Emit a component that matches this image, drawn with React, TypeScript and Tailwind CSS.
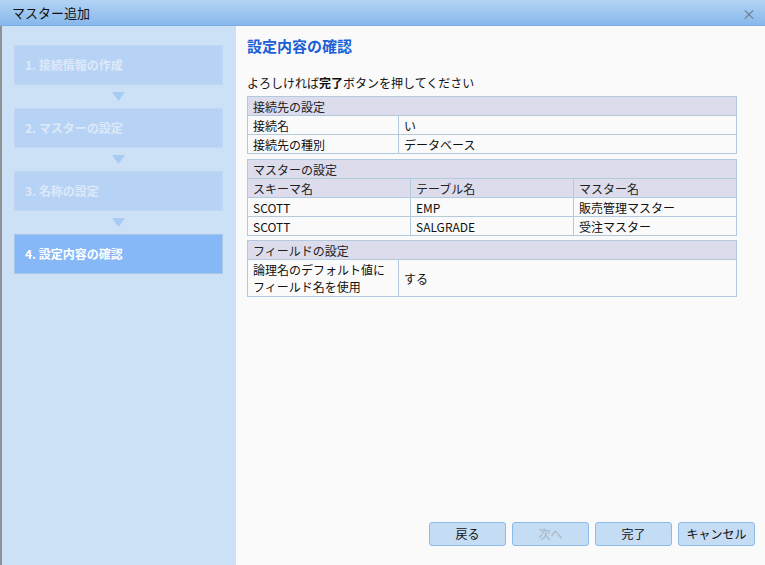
import React from "react";

const font = { fontFamily: '"Noto Sans CJK JP", "Noto Sans", sans-serif' };

function Step({ label, active }: { label: string; active?: boolean }) {
  return (
    <div
      className={
        active
          ? "w-[209px] h-[40px] flex items-center pl-[10px] bg-[#86b8f8] border border-[#a9c6e6] text-white font-bold text-[12px]"
          : "w-[209px] h-[40px] flex items-center pl-[10px] bg-[#b6d3f6] border border-[#c0d8f4] text-[#dde9f8] font-bold text-[12px]"
      }
    >
      {label}
    </div>
  );
}

function Arrow() {
  return (
    <div className="h-[23px] w-[209px] flex items-center justify-center">
      <svg width="13" height="9" viewBox="0 0 13 9">
        <polygon points="0,0 13,0 6.5,9" fill="#a8cbf4" />
      </svg>
    </div>
  );
}

const cell = "border border-[#b3c9de] h-[19px] px-[5px] text-[12px] leading-[17px] text-[#111] align-middle";
const head = "border border-[#b3c9de] h-[19px] px-[5px] text-[12px] leading-[17px] text-[#222] bg-[#dcdcec] text-left font-normal align-middle";

function Btn({ label, disabled }: { label: string; disabled?: boolean }) {
  return (
    <div
      className={
        "w-[77px] h-[24px] flex items-center justify-center rounded-[3px] border border-[#8bbbe9] bg-[#c4dcf4] text-[12px] " +
        (disabled ? "text-[#a8b4c0]" : "text-[#111]")
      }
    >
      {label}
    </div>
  );
}

export default function App() {
  return (
    <div className="w-[765px] h-[565px] flex flex-col overflow-hidden bg-[#fafafa]" style={font}>
      <div className="h-[26px] flex items-center border-b border-[#79aee6] bg-gradient-to-b from-[#b3d3f4] to-[#87b8eb] pl-[3px] pr-[2px]">
        <div className="flex-1 pl-[9px] text-[13px] text-[#111]">マスター追加</div>
        <div className="w-[20px] mr-[4px] text-[14px] text-[#6c7a8a] text-center leading-none">×</div>
      </div>
      <div className="flex-1 flex">
        <div className="w-[2px] bg-[#8e9296]" />
        <div className="w-[234px] bg-[#cce0f6] pt-[19px] px-[12px] flex flex-col">
          <Step label="1. 接続情報の作成" />
          <Arrow />
          <Step label="2. マスターの設定" />
          <Arrow />
          <Step label="3. 名称の設定" />
          <Arrow />
          <Step label="4. 設定内容の確認" active />
        </div>
        <div className="flex-1 flex flex-col pl-[11px] pr-[28px] pt-[9px] pb-[18px]">
          <div className="text-[15px] font-bold text-[#1c5fd6] leading-[22px]">設定内容の確認</div>
          <div className="mt-[17px] text-[12px] text-[#111] leading-[17px]">
            よろしければ<span className="font-bold">完了</span>ボタンを押してください
          </div>
          <table className="mt-[5px] w-[490px] border-collapse">
            <tbody>
              <tr>
                <th colSpan={2} className={head}>接続先の設定</th>
              </tr>
              <tr>
                <td className={cell + " w-[151px]"}>接続名</td>
                <td className={cell}>い</td>
              </tr>
              <tr>
                <td className={cell}>接続先の種別</td>
                <td className={cell}>データベース</td>
              </tr>
            </tbody>
          </table>
          <table className="mt-[5px] w-[490px] border-collapse">
            <tbody>
              <tr>
                <th colSpan={3} className={head}>マスターの設定</th>
              </tr>
              <tr>
                <th className={head + " w-[163px]"}>スキーマ名</th>
                <th className={head + " w-[163px]"}>テーブル名</th>
                <th className={head}>マスター名</th>
              </tr>
              <tr>
                <td className={cell}>SCOTT</td>
                <td className={cell}>EMP</td>
                <td className={cell}>販売管理マスター</td>
              </tr>
              <tr>
                <td className={cell}>SCOTT</td>
                <td className={cell}>SALGRADE</td>
                <td className={cell}>受注マスター</td>
              </tr>
            </tbody>
          </table>
          <table className="mt-[4px] w-[490px] border-collapse">
            <tbody>
              <tr>
                <th colSpan={2} className={head}>フィールドの設定</th>
              </tr>
              <tr>
                <td className={cell + " w-[151px] py-[1px] leading-[17px]"}>
                  論理名のデフォルト値に
                  <br />
                  フィールド名を使用
                </td>
                <td className={cell}>する</td>
              </tr>
            </tbody>
          </table>
          <div className="flex-1" />
          <div className="flex justify-end gap-[6px] -mr-[18px] mb-[1px]">
            <Btn label="戻る" />
            <Btn label="次へ" disabled />
            <Btn label="完了" />
            <Btn label="キャンセル" />
          </div>
        </div>
      </div>
    </div>
  );
}
